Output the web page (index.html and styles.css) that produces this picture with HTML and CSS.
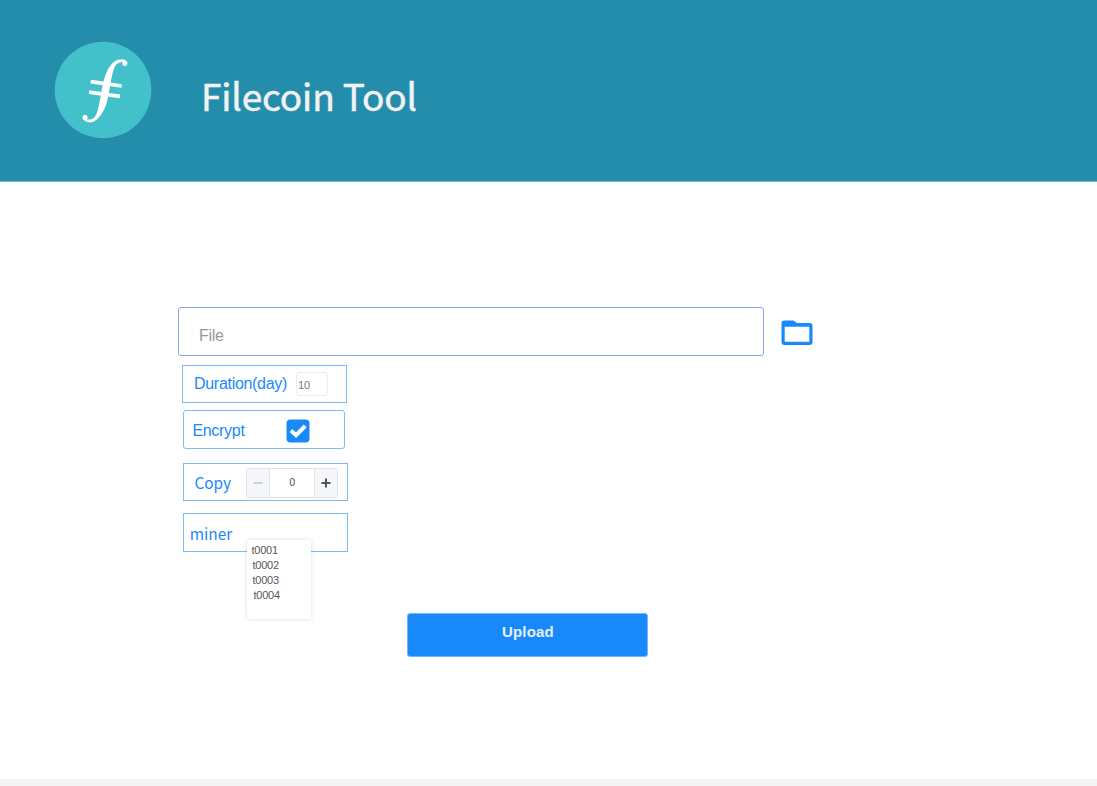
FILE: index.html
```html
<!DOCTYPE html>
<html lang="en">
<head>
<meta charset="utf-8">
<title>Filecoin Tool</title>
<link rel="stylesheet" href="styles.css">
</head>
<body>
<header class="header">
  <svg class="logo" viewBox="0 0 98 98" aria-hidden="true">
    <circle cx="49" cy="49" r="48.300" fill="#43c1cb"/>
    <path d="M72 22C70 18 61 18 56 31C53 39 52 50 49 61C46 73 41 80 36 80C33 80 31 79 30.500 77" fill="none" stroke="#fff" stroke-width="2.800" stroke-linecap="round"/>
    <path d="M64 19.500C57 26 56 44 53.500 55C51 68 46 76 39 80C45 74 46 62 48.500 49C51 34 55 23 64 19.500Z" fill="#fff" stroke="#fff" stroke-width="1.500"/>
    <circle cx="70.800" cy="22.500" r="2.500" fill="#fff"/>
    <circle cx="31" cy="76.500" r="2.500" fill="#fff"/>
    <path d="M36.700 40.700L67.700 45M35 51.100L66 55.400" stroke="#fff" stroke-width="3.700"/>
  </svg>
  <h1 class="title">Filecoin Tool</h1>
</header>
<main class="main">
  <div class="file-row">
    <div class="file-input">File</div>
    <svg class="folder" viewBox="0 0 32 26" aria-hidden="true">
      <path d="M3.500 0.500H12.500L16 3H28.500Q31.500 3 31.500 6V22Q31.500 25 28.500 25H3.500Q0.500 25 0.500 22V3.500Q0.500 0.500 3.500 0.500ZM3.700 6.700V21.800H28.300V6.700Z" fill="#1989fa" fill-rule="evenodd"/>
    </svg>
  </div>
  <div class="field duration">
    <span class="duration-label">Duration(day)</span>
    <span class="days">10</span>
  </div>
  <div class="field encrypt">
    <span class="encrypt-label">Encrypt</span>
    <svg class="check" viewBox="0 0 24 24" aria-hidden="true">
      <rect x="0.500" y="0.500" width="23" height="23" rx="4" fill="#1989fa"/>
      <path d="M5 11.500L10 16.200L19.200 7" fill="none" stroke="#fff" stroke-width="4"/>
    </svg>
  </div>
  <div class="field copy">
    <span class="copy-label">Copy</span>
    <div class="stepper">
      <span class="step"><svg viewBox="0 0 10 10"><path d="M0.500 5H9.500" stroke="#c0c4cc" stroke-width="1.700"/></svg></span>
      <span class="count">0</span>
      <span class="step plus"><svg viewBox="0 0 10 10"><path d="M0.500 5H9.500M5 0.500V9.500" stroke="#505358" stroke-width="2"/></svg></span>
    </div>
  </div>
  <div class="field miner">
    <span class="miner-label">miner</span>
    <ul class="menu">
      <li>t0001</li>
      <li class="shift">t0002</li>
      <li class="shift">t0003</li>
      <li class="shift-more">t0004</li>
    </ul>
  </div>
  <button class="upload">Upload</button>
</main>
<footer class="footer"></footer>
</body>
</html>
```
FILE: styles.css
```css
* {
  box-sizing: border-box;
}

body {
  margin: 0;
  height: 786px;
  display: flex;
  flex-direction: column;
  overflow: hidden;
  background: #fff;
  font-family: "Liberation Sans", sans-serif;
}

.header {
  height: 182px;
  flex: none;
  display: flex;
  align-items: flex-start;
  padding: 41px 0 0 54px;
  background: #248dab;
  border-bottom: 1px solid #7fbccd;
}

.logo {
  width: 98px;
  height: 98px;
}

.title {
  margin: 24px 0 0 49px;
  font: 400 37px/60px "Noto Sans CJK SC", sans-serif;
  letter-spacing: -0.15px;
  color: #f2f2f2;
  -webkit-text-stroke: 0.5px #f2f2f2;
  white-space: nowrap;
}

.main {
  flex: 1;
  display: flex;
  flex-direction: column;
  align-items: flex-start;
  padding: 125px 0 0 178px;
}

.file-row {
  display: flex;
}

.file-input {
  width: 586px;
  height: 49px;
  padding: 8px 0 0 20px;
  border: 1px solid #86a2f2;
  border-radius: 3px;
  font-size: 16px;
  letter-spacing: -0.3px;
  line-height: 40px;
  color: #999;
}

.folder {
  width: 32px;
  height: 26px;
  margin: 13px 0 0 17px;
}

.field {
  position: relative;
  display: flex;
  width: 165px;
  height: 38px;
  border: 1px solid #7dbafb;
  color: #1989fa;
  font-size: 16px;
}

.duration {
  margin: 9px 0 0 4px;
  padding-left: 11px;
}

.duration-label {
  width: 102px;
  letter-spacing: -0.3px;
  line-height: 36px;
}

.days {
  width: 32px;
  height: 24px;
  margin-top: 6px;
  padding-left: 1px;
  border: 1px solid #ebedf2;
  border-radius: 3px;
  color: #77797d;
  font-size: 11px;
  line-height: 24px;
}

.encrypt {
  width: 162px;
  height: 39px;
  margin: 7px 0 0 5.4px;
  padding-left: 8px;
  border-radius: 3px;
}

.encrypt-label {
  width: 94px;
  letter-spacing: -0.3px;
  line-height: 39px;
}

.check {
  width: 24px;
  height: 24px;
  margin-top: 8px;
}

.copy {
  margin: 14px 0 0 5.4px;
  padding-left: 10px;
  font-family: "Noto Sans CJK SC", sans-serif;
  font-size: 15.4px;
}

.copy-label {
  width: 52px;
  line-height: 36px;
}

.stepper {
  display: flex;
  width: 92px;
  height: 30px;
  margin-top: 4px;
  border: 1px solid #e1e4eb;
  border-radius: 3px;
  overflow: hidden;
}

.step {
  width: 23px;
  flex: none;
  display: grid;
  place-items: center;
  background: #f5f7fa;
  border-right: 1px solid #e1e4eb;
}

.step svg {
  width: 10px;
  height: 10px;
}

.plus {
  border-right: 0;
  border-left: 1px solid #e1e4eb;
}

.count {
  flex: 1;
  color: #55575c;
  font-size: 11px;
  line-height: 25px;
  text-align: center;
}

.miner {
  height: 39px;
  margin: 12px 0 0 5.4px;
  padding-left: 5.4px;
  font-family: "Noto Sans CJK SC", sans-serif;
  font-size: 15.4px;
}

.miner-label {
  line-height: 39px;
}

.menu {
  position: absolute;
  left: 63px;
  top: 26px;
  width: 64px;
  height: 79px;
  margin: 0;
  padding: 3px 0 0 4px;
  list-style: none;
  background: #fff;
  border-radius: 2px;
  box-shadow: 0 0 4px rgba(0, 0, 0, 0.15);
  color: #55575c;
  font: 11px/15px "Liberation Sans", sans-serif;
  letter-spacing: -0.2px;
}

.shift {
  padding-left: 1px;
}

.shift-more {
  padding-left: 2px;
}

.upload {
  width: 241px;
  height: 44px;
  margin: 61px 0 0 229.4px;
  padding: 0 0 6px;
  border: 1px solid #72b7fc;
  border-radius: 3px;
  background: #1989fa;
  color: #e3f0fe;
  font: bold 15px/18px "Liberation Sans", sans-serif;
  letter-spacing: 0.2px;
}

.footer {
  height: 7px;
  flex: none;
  background: #f4f4f4;
}
```
